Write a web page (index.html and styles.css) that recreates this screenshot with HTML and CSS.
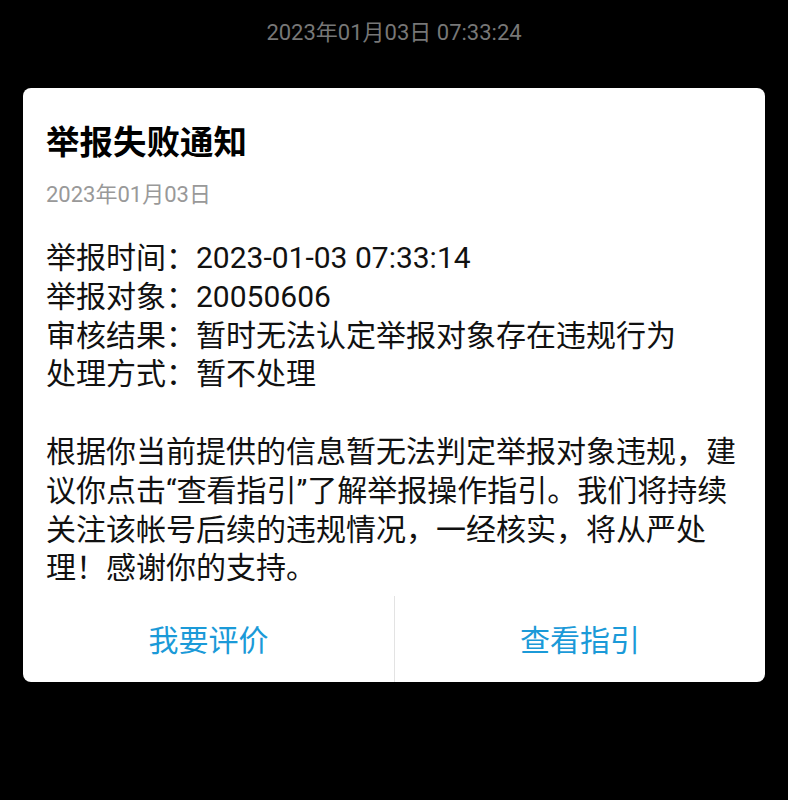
FILE: index.html
```html
<!DOCTYPE html>
<html lang="zh-CN">
<head>
<meta charset="utf-8">
<title>举报失败通知</title>
<link rel="stylesheet" href="styles.css">
</head>
<body>
<div class="screen">
  <div class="timestamp">2023年01月03日 07:33:24</div>
  <div class="card">
    <div class="card-body">
      <h1 class="title">举报失败通知</h1>
      <div class="date">2023年01月03日</div>
      <div class="content">
        <div class="line">举报时间：2023-01-03 07:33:14</div>
        <div class="line">举报对象：20050606</div>
        <div class="line">审核结果：暂时无法认定举报对象存在违规行为</div>
        <div class="line">处理方式：暂不处理</div>
        <p class="para">根据你当前提供的信息暂无法判定举报对象违规，建议你点击“查看指引”了解举报操作指引。我们将持续关注该帐号后续的违规情况，一经核实，将从严处理！感谢你的支持。</p>
      </div>
    </div>
    <div class="actions">
      <div class="action">我要评价</div>
      <div class="action action-right">查看指引</div>
    </div>
  </div>
</div>
</body>
</html>
```
FILE: styles.css
```css
html, body {
  margin: 0;
  padding: 0;
  background: #000;
}
body {
  font-family: "Roboto", "Noto Sans CJK SC", sans-serif;
}
.screen {
  width: 788px;
  height: 800px;
  background: #000;
  padding-top: 18px;
  box-sizing: border-box;
}
.timestamp {
  text-align: center;
  color: #777;
  font-size: 22px;
  line-height: 30px;
  height: 30px;
  margin-bottom: 40px;
}
.card {
  margin: 0 23px;
  background: #fff;
  border-radius: 8px;
  overflow: hidden;
}
.card-body {
  padding: 34px 23px 8px 23px;
}
.title {
  margin: 0;
  font-size: 33.5px;
  line-height: 42px;
  font-weight: 700;
  color: #000;
}
.date {
  margin-top: 16px;
  font-size: 22px;
  line-height: 30px;
  color: #999;
}
.content {
  margin-top: 29px;
  font-size: 30px;
  line-height: 38.8px;
  color: #111;
}
.para {
  margin: 38.8px 0 0 0;
}
.actions {
  display: grid;
  grid-template-columns: 1fr 1fr;
  height: 86px;
}
.action {
  display: flex;
  align-items: center;
  justify-content: center;
  color: #1b9ad8;
  font-size: 30px;
  padding-bottom: 2px;
}
.action-right {
  border-left: 1px solid #e3e3e3;
}
```
